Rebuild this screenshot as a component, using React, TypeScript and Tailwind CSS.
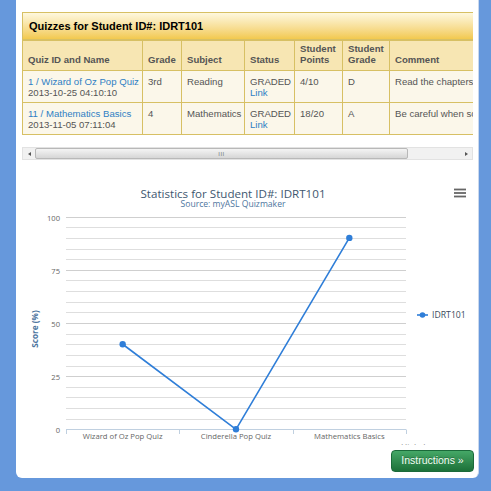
const SANS = "'Liberation Sans', Arial, sans-serif";
const CHART = "'Open Sans', 'Liberation Sans', sans-serif";

const quizzes = [
  {
    name: '1 / Wizard of Oz Pop Quiz',
    date: '2013-10-25 04:10:10',
    grade: '3rd',
    subject: 'Reading',
    points: '4/10',
    letter: 'D',
    comment: 'Read the chapters again before the next quiz',
  },
  {
    name: '11 / Mathematics Basics',
    date: '2013-11-05 07:11:04',
    grade: '4',
    subject: 'Mathematics',
    points: '18/20',
    letter: 'A',
    comment: 'Be careful when solving word problems',
  },
];

// chart geometry, in page pixels
const LEFT = 66;
const RIGHT = 406;
const ZERO = 430.3;
const PER = 2.1264;
const yOf = (v: number) => ZERO - v * PER;
const cats = ['Wizard of Oz Pop Quiz', 'Cinderella Pop Quiz', 'Mathematics Basics'];
const scores = [40, 0, 90];
const colW = (RIGHT - LEFT) / cats.length;
const xOf = (i: number) => LEFT + colW * (i + 0.5);

function Chart() {
  const grid = Array.from({ length: 21 }, (_, k) => k * 5);
  const pts = scores.map((s, i) => `${xOf(i)},${yOf(s)}`).join(' ');
  return (
    <svg width={463} height={281} viewBox="16 165 463 281" className="block" style={{ fontFamily: CHART }}>
      <text x={233} y={199} textAnchor="middle" fontSize={11.6} fill="#3e576f">
        Statistics for Student ID#: IDRT101
      </text>
      <text x={233} y={207.5} textAnchor="middle" fontSize={8.6} fill="#4d759e">
        Source: myASL Quizmaker
      </text>

      {/* export menu */}
      <g stroke="#666" strokeWidth={1.8}>
        <line x1={454} x2={466} y1={190.5} y2={190.5} />
        <line x1={454} x2={466} y1={194} y2={194} />
        <line x1={454} x2={466} y1={197.5} y2={197.5} />
      </g>

      {grid.map((v) => {
        const y = Math.round(yOf(v)) + 0.5;
        const major = v % 25 === 0;
        return (
          <g key={v}>
            {v > 0 && (
              <line x1={LEFT} x2={RIGHT} y1={y} y2={y} stroke={major ? '#cfcfcf' : '#dedede'} strokeWidth={1} />
            )}
            {major && (
              <text x={60} y={y + 3} textAnchor="end" fontSize={7.6} fill="#666">
                {v}
              </text>
            )}
          </g>
        );
      })}

      <text
        x={38}
        y={330}
        transform="rotate(-90 38 330)"
        textAnchor="middle"
        fontSize={8.2}
        fontWeight="bold"
        fill="#4d759e"
      >
        Score (%)
      </text>

      {/* x axis */}
      <line x1={LEFT} x2={RIGHT} y1={430.5} y2={430.5} stroke="#c0d0e0" strokeWidth={1} />
      {[0, 1, 2, 3].map((i) => {
        const x = Math.round(LEFT + colW * i) + 0.5;
        return <line key={i} x1={x} x2={x} y1={430.5} y2={435} stroke="#c0d0e0" strokeWidth={1} />;
      })}
      {cats.map((c, i) => (
        <text key={c} x={xOf(i)} y={440} textAnchor="middle" fontSize={7.7} fill="#666">
          {c}
        </text>
      ))}

      <polyline points={pts} fill="none" stroke="#2f7ed8" strokeWidth={1.6} />
      {scores.map((s, i) => (
        <circle key={i} cx={xOf(i)} cy={yOf(s)} r={3.2} fill="#2f7ed8" />
      ))}

      {/* legend */}
      <line x1={417} x2={428} y1={316} y2={316} stroke="#2f7ed8" strokeWidth={1.6} />
      <circle cx={422.5} cy={316} r={2.8} fill="#2f7ed8" />
      <text x={432} y={319.2} fontSize={8.7} fill="#3a4a5c">
        IDRT101
      </text>

      <text x={463} y={451.5} textAnchor="end" fontSize={8.5} fill="#909090">
        Highcharts.com
      </text>
    </svg>
  );
}

function Scrollbar() {
  return (
    <div className="flex h-[13px] w-[451px] items-stretch border border-[#e2e2e2] bg-[#f1f1f1]">
      <div className="flex w-[12px] items-center justify-center">
        <span className="h-0 w-0 border-y-[2.5px] border-r-[3px] border-y-transparent border-r-[#555]" />
      </div>
      <div className="flex w-[373px] items-center justify-center rounded-[2px] border border-[#b8b8b8] bg-gradient-to-b from-[#f4f4f4] to-[#d6d6d6]">
        <span className="text-[6px] leading-none tracking-[0.5px] text-[#777]" style={{ fontFamily: SANS }}>
          III
        </span>
      </div>
      <div className="grow" />
      <div className="flex w-[12px] items-center justify-center">
        <span className="h-0 w-0 border-y-[2.5px] border-l-[3px] border-y-transparent border-l-[#555]" />
      </div>
    </div>
  );
}

export default function App() {
  const th =
    'h-[30px] border border-[#d7c064] bg-[#f7e6b3] px-[5px] pb-[5px] text-left align-bottom font-bold leading-[11px] whitespace-nowrap';
  const td =
    'h-[32px] border border-[#d7c064] bg-[#fbf7ea] px-[5px] pt-[5px] align-top leading-[11px] whitespace-nowrap overflow-hidden';
  return (
    <div className="h-[491px] w-[491px] overflow-hidden bg-[#6698dc] pl-[16px]">
      <div className="flex h-[478px] w-[463px] flex-col rounded-b-[6px] border-r border-[#c9d8ee] bg-white">
        <div className="px-[6px] pt-[12px]">
          <div className="w-[451px] overflow-hidden">
            <div className="w-[640px] text-[9.6px] text-[#555]" style={{ fontFamily: SANS }}>
              <div className="flex h-[28px] items-center border border-[#d7c064] bg-gradient-to-b from-[#fef8de] to-[#f2c94d] pl-[6px] text-[11px] font-bold text-black">
                Quizzes for Student ID#: IDRT101
              </div>
              <table className="w-[640px] table-fixed border-collapse">
                <colgroup>
                  <col className="w-[120px]" />
                  <col className="w-[39px]" />
                  <col className="w-[63px]" />
                  <col className="w-[50px]" />
                  <col className="w-[48px]" />
                  <col className="w-[47px]" />
                  <col />
                </colgroup>
                <thead>
                  <tr>
                    <th className={th}>Quiz ID and Name</th>
                    <th className={th}>Grade</th>
                    <th className={th}>Subject</th>
                    <th className={th}>Status</th>
                    <th className={th}>
                      Student
                      <br />
                      Points
                    </th>
                    <th className={th}>
                      Student
                      <br />
                      Grade
                    </th>
                    <th className={th}>Comment</th>
                  </tr>
                </thead>
                <tbody>
                  {quizzes.map((q) => (
                    <tr key={q.name}>
                      <td className={td}>
                        <div className="text-[#2f80c4]">{q.name}</div>
                        <div>{q.date}</div>
                      </td>
                      <td className={td}>{q.grade}</td>
                      <td className={td}>{q.subject}</td>
                      <td className={td}>
                        <div>GRADED</div>
                        <div className="text-[#2f80c4]">Link</div>
                      </td>
                      <td className={td}>{q.points}</td>
                      <td className={td}>{q.letter}</td>
                      <td className={td}>{q.comment}</td>
                    </tr>
                  ))}
                </tbody>
              </table>
            </div>
          </div>
          <div className="mt-[12px]">
            <Scrollbar />
          </div>
        </div>

        <div className="mt-[4px]">
          <Chart />
        </div>

        <div className="mt-[5px] flex justify-end pr-[4px]">
          <button
            className="flex h-[22px] w-[83px] items-center justify-center rounded-[4px] border border-[#1b6a3a] bg-gradient-to-b from-[#45a867] to-[#1c7139] text-[10.5px] text-[#f2fff4]"
            style={{ fontFamily: SANS, textShadow: '0 -1px 0 rgba(0,0,0,0.25)' }}
          >
            Instructions »
          </button>
        </div>
      </div>
    </div>
  );
}
